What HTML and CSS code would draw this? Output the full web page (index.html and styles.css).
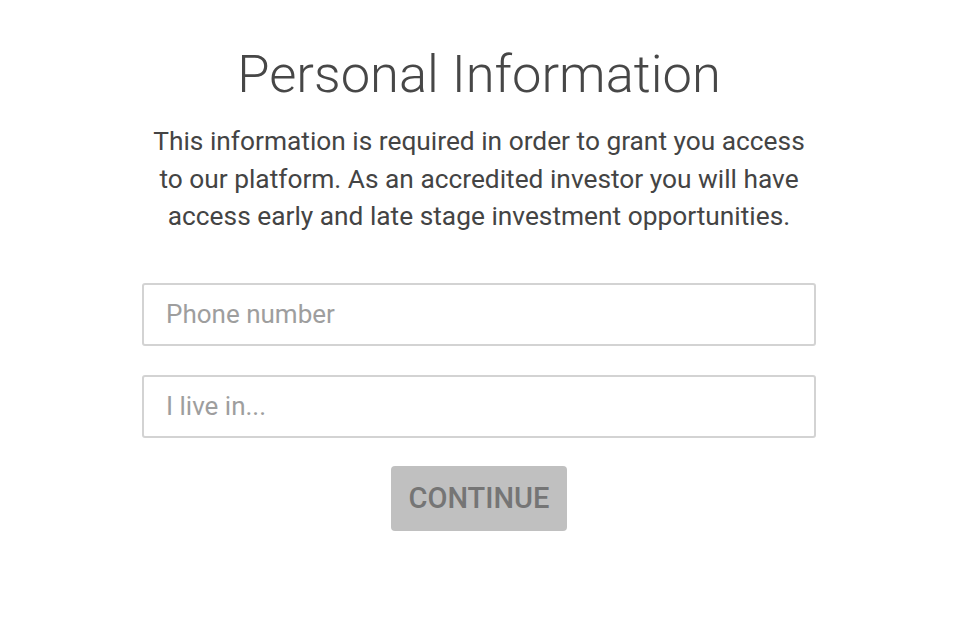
FILE: index.html
```html
<!DOCTYPE html>
<html>
<head>
<meta charset="utf-8">
<link rel="stylesheet" href="styles.css">
</head>
<body>
<main class="page">
  <h1 class="title">Personal Information</h1>
  <p class="intro">This information is required in order to grant you access<br>to our platform. As an accredited investor you will have<br>access early and late stage investment opportunities.</p>
  <form class="form">
    <input class="field" type="text" placeholder="Phone number">
    <input class="field" type="text" placeholder="I live in...">
    <button class="btn" type="button">CONTINUE</button>
  </form>
</main>
</body>
</html>
```

FILE: styles.css
```css
html, body {
  margin: 0;
  padding: 0;
  background: #fff;
}
body {
  font-family: Roboto, "Liberation Sans", sans-serif;
  color: #444;
}
.page {
  display: flex;
  flex-direction: column;
  align-items: center;
  padding-top: 40px;
  padding-right: 16px;
}
.title {
  margin: 0;
  font-weight: 300;
  font-size: 52.5px;
  line-height: 68px;
  color: #474747;
}
.intro {
  margin: 15px 0 0;
  font-size: 26.3px;
  line-height: 37.5px;
  text-align: center;
  color: #444;
}
.form {
  margin-top: 47px;
  width: 674px;
  display: flex;
  flex-direction: column;
  align-items: center;
}
.field {
  box-sizing: border-box;
  width: 674px;
  height: 63px;
  border: 2px solid #d3d3d3;
  border-radius: 3px;
  padding: 0 22px;
  font-family: Roboto, "Liberation Sans", sans-serif;
  font-size: 26px;
  color: #444;
  margin-bottom: 29px;
  outline: none;
}
.field::placeholder {
  color: #9e9e9e;
}
.field:last-of-type {
  margin-bottom: 28px;
}
.btn {
  width: 176px;
  height: 65px;
  border: none;
  border-radius: 4px;
  background: #c0c0c0;
  color: #757575;
  font-family: Roboto, "Liberation Sans", sans-serif;
  font-weight: 500;
  font-size: 29px;
  padding: 0;
}
```
